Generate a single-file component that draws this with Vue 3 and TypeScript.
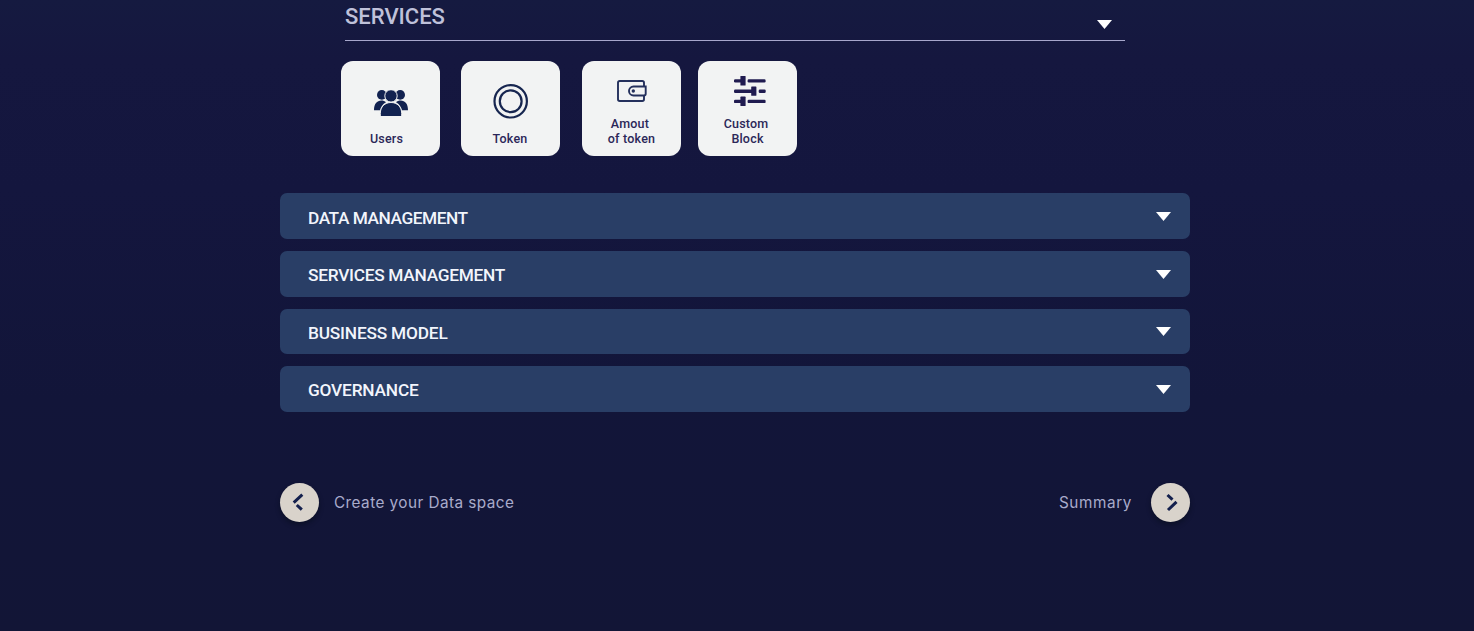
<script setup lang="ts">
interface Card {
  id: string
  lines: string[]
}

const cards: Card[] = [
  { id: 'users', lines: ['Users'] },
  { id: 'token', lines: ['Token'] },
  { id: 'wallet', lines: ['Amout', 'of token'] },
  { id: 'custom', lines: ['Custom', 'Block'] },
]

const sections: { id: string; title: string }[] = [
  { id: 'data-management', title: 'DATA MANAGEMENT' },
  { id: 'services-management', title: 'SERVICES MANAGEMENT' },
  { id: 'business-model', title: 'BUSINESS MODEL' },
  { id: 'governance', title: 'GOVERNANCE' },
]
</script>

<template>
  <main class="page">
    <header class="services">
      <h2>SERVICES</h2>
      <svg class="caret" viewBox="0 0 15 9"><path d="M0 0H15L7.5 9Z" /></svg>
    </header>

    <div class="cards">
      <button v-for="card in cards" :key="card.id" class="card" :class="card.id">
        <svg v-if="card.id === 'users'" class="icon" width="34" height="26" viewBox="0 0 34 26">
          <g fill="#122250">
            <circle cx="7.8" cy="4.9" r="4.8" />
            <circle cx="26.2" cy="4.9" r="4.8" />
            <path d="M0 20.2C0 14 3 10.6 7.3 10.6c2 0 3.5.6 4.7 1.7C8.7 14.2 6.8 17 6.2 20.2Z" />
            <path d="M34 20.2C34 14 31 10.6 26.7 10.6c-2 0-3.5.6-4.7 1.7 3.3 1.9 5.2 4.7 5.8 7.9Z" />
          </g>
          <g fill="#122250" stroke="#f2f3f3" stroke-width="1">
            <circle cx="17" cy="5.9" r="6.2" />
            <path d="M6.3 26.6V23.5C6.3 16.5 11 12.5 17 12.5S27.7 16.5 27.7 23.5V26.6Z" />
          </g>
        </svg>
        <svg v-else-if="card.id === 'token'" class="icon" width="36" height="36" viewBox="0 0 36 36">
          <g fill="none" stroke="#172650" stroke-width="2.2">
            <circle cx="17.700" cy="18.300" r="16.2" />
            <circle cx="17.700" cy="18.300" r="10.9" />
          </g>
        </svg>
        <svg v-else-if="card.id === 'wallet'" class="icon" width="30" height="22" viewBox="0 0 30 22">
          <g fill="none" stroke="#24305c" stroke-width="1.9">
            <path d="M27 6.3V2.7Q27 1 25.3 1H2.7Q1 1 1 2.7V19.3Q1 21 2.7 21H25.3Q27 21 27 19.3V15.7" />
            <path d="M28.7 6.5H16.5A4.5 4.5 0 0 0 16.5 15.5H27Q28.7 15.5 28.7 13.8Z" />
          </g>
          <circle cx="16.3" cy="11" r="1.7" fill="#24305c" />
        </svg>
        <svg v-else class="icon" width="32" height="30" viewBox="0 0 32 30">
          <g fill="#201b50">
            <rect x="0" y="3.2" width="8" height="3.3" rx="1.2" />
            <rect x="6.4" y="0" width="5.2" height="9.6" rx="0.6" />
            <rect x="13.6" y="3.2" width="18" height="3.3" rx="1.2" />
            <rect x="0" y="13.6" width="20" height="3.3" rx="1.2" />
            <rect x="17.2" y="10.4" width="5.2" height="9.4" rx="0.6" />
            <rect x="24.7" y="13.6" width="7" height="3.3" rx="1.2" />
            <rect x="0" y="23.8" width="8" height="3.3" rx="1.2" />
            <rect x="6.4" y="20.6" width="5.2" height="9.4" rx="0.6" />
            <rect x="13.6" y="23.8" width="18" height="3.3" rx="1.2" />
          </g>
        </svg>
        <span v-for="line in card.lines" :key="line" class="label">{{ line }}</span>
      </button>
    </div>

    <section class="accordion">
      <button v-for="section in sections" :key="section.id" class="bar" :class="section.id">
        <span>{{ section.title }}</span>
        <svg class="caret" viewBox="0 0 15 9"><path d="M0 0H15L7.5 9Z" /></svg>
      </button>
    </section>

    <nav class="steps">
      <a class="step">
        <span class="round">
          <svg width="39" height="39" viewBox="0 0 39 39">
            <path d="M22.3 11.7L13.7 19.7M16.8 22L21.8 26.7" />
          </svg>
        </span>
        <span class="back">Create your Data space</span>
      </a>
      <a class="step">
        <span class="next">Summary</span>
        <span class="round">
          <svg width="39" height="39" viewBox="0 0 39 39">
            <path d="M16.5 12L21.5 16.7M25.5 18.8L17 27" />
          </svg>
        </span>
      </a>
    </nav>
  </main>
</template>

<style>
body {
  margin: 0;
  background: #121537;
}
</style>

<style scoped>
.page {
  box-sizing: border-box;
  width: 1474px;
  height: 631px;
  overflow: hidden;
  padding-left: 280px;
  background: linear-gradient(180deg, #151a40 0, #15173f 60px, #14163e 190px, #121539 400px, #121536 631px);
  font-family: Roboto, "Liberation Sans", sans-serif;
}

button {
  border: 0;
  font: inherit;
}

.caret {
  display: block;
  width: 15px;
  height: 9px;
  fill: #fff;
}

.services {
  box-sizing: border-box;
  display: flex;
  justify-content: space-between;
  width: 780px;
  height: 41px;
  margin-left: 65px;
  padding-right: 13px;
  border-bottom: 1px solid #a7a7cc;
}

.services h2 {
  margin: 3px 0 0;
  font-size: 22px;
  line-height: 28px;
  font-weight: 500;
  letter-spacing: 0;
  color: #bfc1da;
}

.services .caret {
  margin-top: 20px;
}

.cards {
  display: flex;
  margin: 20px 0 0 61px;
}

.card {
  box-sizing: border-box;
  display: flex;
  flex-direction: column;
  align-items: center;
  width: 99px;
  height: 95px;
  padding: 0;
  border-radius: 12px;
  background: #f2f3f3;
  color: #2b2758;
}

.users {
  margin-right: 21px;
}

.token {
  margin-right: 22px;
}

.wallet {
  margin-right: 17px;
}

.icon {
  display: block;
  flex: none;
}

.users .icon {
  margin: 29px 0 15px;
}

.token .icon {
  margin: 22px 0 12px;
}

.wallet .icon {
  margin: 19px 0 14px;
}

.custom .icon {
  margin: 15px 0 10px 4px;
}

.label {
  font-size: 12.5px;
  line-height: 15.3px;
  font-weight: 500;
  letter-spacing: 0.2px;
}

.users .label {
  padding-right: 8px;
}

.token .label {
  padding-right: 1px;
}

.wallet .label:first-of-type,
.custom .label:first-of-type {
  padding-right: 3px;
}

.accordion {
  display: flex;
  flex-direction: column;
  gap: 12px;
  width: 909.5px;
  margin-top: 37.4px;
}

.bar {
  box-sizing: border-box;
  display: flex;
  justify-content: space-between;
  height: 45.65px;
  padding: 18.5px 19px 0 28px;
  border-radius: 7px;
  background: #293e66;
  color: #f2f5fc;
  font-size: 17.3px;
  line-height: 24px;
  font-weight: 500;
}

.bar span {
  margin-top: -6.4px;
}

.data-management {
  letter-spacing: -0.45px;
}

.services-management {
  letter-spacing: -0.27px;
}

.business-model,
.governance {
  letter-spacing: -0.19px;
}

.steps {
  display: flex;
  justify-content: space-between;
  width: 909.5px;
  margin-top: 71px;
}

.step {
  display: flex;
  align-items: center;
  font-family: Inter, "Open Sans", sans-serif;
  font-weight: 400;
  font-size: 15.3px;
  color: #a9abcb;
}

.round {
  width: 39px;
  height: 39px;
  border-radius: 50%;
  background: #d9d3cb;
  box-shadow: 0 3px 5px rgba(5, 10, 20, 0.45);
}

.round svg {
  display: block;
  fill: none;
  stroke: #14204d;
  stroke-width: 3;
}

.back {
  margin-left: 15px;
  letter-spacing: 0.45px;
}

.next {
  margin-right: 18.5px;
  letter-spacing: 0.6px;
}
</style>
